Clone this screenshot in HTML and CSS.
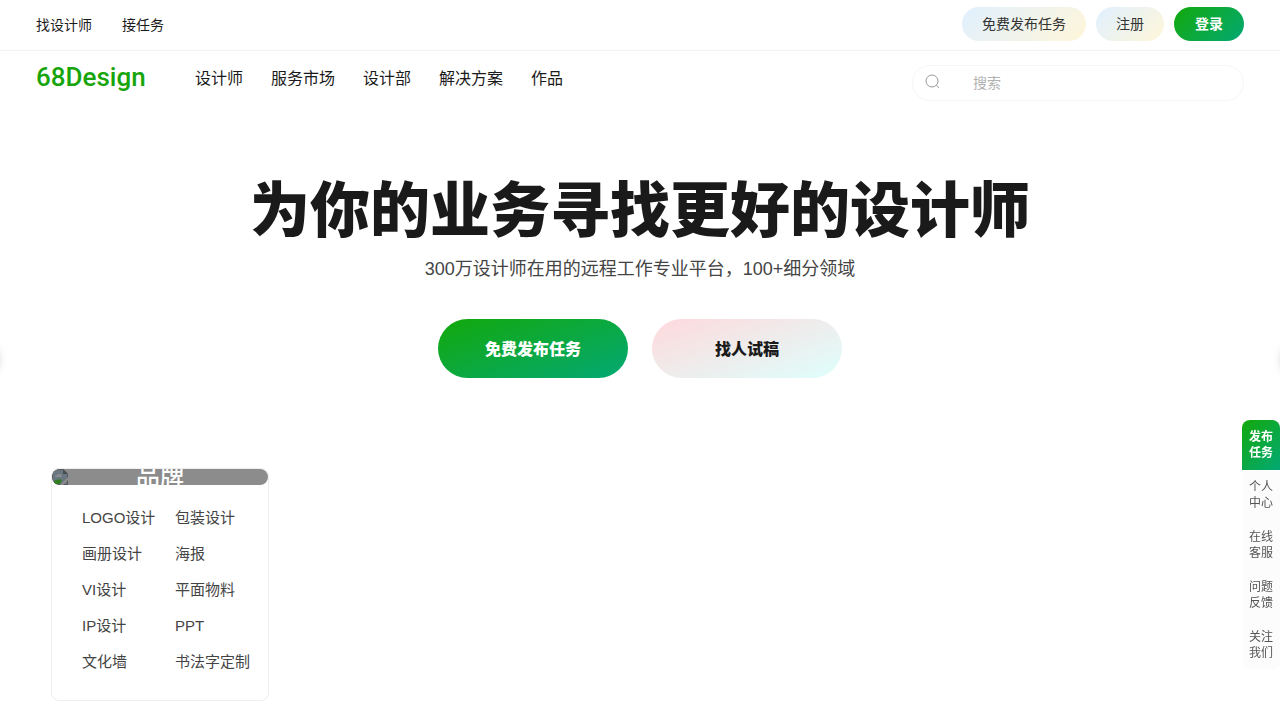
FILE: index.html
```html
<!DOCTYPE html>
<html lang="zh-CN">

<head>
    <meta charset="UTF-8">
    <meta name="viewport" content="width=device-width, initial-scale=1.0">
    <title>68Design</title>
    <link rel="stylesheet" href="styles.css">
</head>

<body>
    <div class="topbar">
        <nav class="topLinks">
            <a href="#">找设计师</a>
            <a href="#">接任务</a>
        </nav>
        <div class="account">
            <button class="pill" type="button">免费发布任务</button>
            <button class="pill" type="button">注册</button>
            <button class="pill login" type="button">登录</button>
        </div>
    </div>

    <header class="header">
        <a class="logo" href="#">68Design</a>
        <nav class="menu">
            <a href="#">设计师</a>
            <a href="#">服务市场</a>
            <a href="#">设计部</a>
            <a href="#">解决方案</a>
            <a href="#">作品</a>
        </nav>
        <form class="search">
            <svg width="16" height="18" viewBox="0 0 16 18" fill="none" stroke="#999" aria-hidden="true">
                <circle cx="7" cy="7" r="6" />
                <path d="M11.3 11.3 L14 13.8" />
            </svg>
            <input type="text" placeholder="搜索" aria-label="搜索">
        </form>
    </header>

    <main>
        <section class="hero">
            <h1>为你的业务寻找更好的设计师</h1>
            <p>300万设计师在用的远程工作专业平台，100+细分领域</p>
            <div class="actions">
                <button class="publish" type="button">免费发布任务</button>
                <button class="trial" type="button">找人试稿</button>
            </div>
        </section>

        <section class="card">
            <div class="cover">
                <svg width="16" height="16" viewBox="0 0 16 16" aria-hidden="true">
                    <path d="M0 0h11l5 5v11H0z" fill="#555b60" />
                    <path d="M1 1h10v4h4v10H1z" fill="#69767f" />
                    <path d="M3 8q0-2 2-2 1-2 3-1 2 0 2 3z" fill="#858b8f" />
                    <path d="M2 15v-3q4-3 8-1l-2 4z" fill="#327d20" />
                    <path d="M11 0v5h5z" fill="#484d50" />
                    <path d="M8 16l8-8v3l-5 5z" fill="#8c8c8c" />
                </svg>
                <h2>品牌</h2>
            </div>
            <ul class="types">
                <li><a href="#">LOGO设计</a></li>
                <li><a href="#">包装设计</a></li>
                <li><a href="#">画册设计</a></li>
                <li><a href="#">海报</a></li>
                <li><a href="#">VI设计</a></li>
                <li><a href="#">平面物料</a></li>
                <li><a href="#">IP设计</a></li>
                <li><a href="#">PPT</a></li>
                <li><a href="#">文化墙</a></li>
                <li><a href="#">书法字定制</a></li>
            </ul>
        </section>
    </main>

    <div class="arrow prev"></div>
    <div class="arrow next"></div>

    <aside class="sidebar">
        <a class="active" href="#">发布<br>任务</a>
        <a href="#">个人<br>中心</a>
        <a href="#">在线<br>客服</a>
        <a href="#">问题<br>反馈</a>
        <a href="#">关注<br>我们</a>
    </aside>
</body>

</html>
```
FILE: styles.css
```css
* {
  margin: 0;
  padding: 0;
  box-sizing: border-box;
}
body {
  font-family: "Liberation Sans", "Noto Sans CJK SC", sans-serif;
  font-size: 14px;
  color: #1a1a1a;
  background-color: #fff;
  overflow-x: hidden;
}
a {
  color: inherit;
  text-decoration: none;
}
button,
input {
  font-family: inherit;
  border: none;
  outline: none;
}
button {
  padding-bottom: 2px;
  cursor: pointer;
}
ul {
  list-style: none;
}

.topbar {
  display: flex;
  align-items: center;
  justify-content: space-between;
  padding: 7px 36px 9px;
  border-bottom: 1px solid #f2f2f2;
}
.topLinks {
  display: flex;
  gap: 30px;
}
.account {
  display: flex;
  gap: 10px;
}
.pill {
  height: 34px;
  padding: 0 20px 2px;
  border-radius: 17px;
  font-size: 14px;
  color: #333;
  background: linear-gradient(135deg, #e0f0ff, #fff6d9);
}
.pill.login {
  padding: 0 21px 2px;
  font-weight: bold;
  color: white;
  background: linear-gradient(135deg, #13a80b, #03a974);
}

.header {
  display: flex;
  align-items: flex-start;
  padding: 14px 36px 0;
}
.logo {
  width: 110px;
  margin-right: 49px;
  font-family: Roboto, sans-serif;
  font-size: 26px;
  font-weight: 500;
  line-height: 24px;
  color: #18a50b;
}
.menu {
  display: flex;
  gap: 28px;
  font-size: 16px;
  line-height: 28px;
}
.search {
  display: flex;
  align-items: center;
  width: 332px;
  height: 36px;
  margin-left: auto;
  padding: 0 12px;
  border: 1px solid #f5f5f5;
  border-radius: 18px;
}
.search input {
  flex: 1;
  min-width: 0;
  margin-left: 32px;
  font-size: 14px;
  background: none;
}
.search input::placeholder {
  color: #b2b2b2;
}

.hero {
  padding-top: 66px;
  text-align: center;
}
.hero h1 {
  font-size: 60px;
  font-weight: 900;
  line-height: 90px;
}
.hero p {
  font-size: 18px;
  line-height: 24px;
  color: #444;
}
.actions {
  display: flex;
  justify-content: center;
  gap: 24px;
  margin-top: 38px;
}
.actions button {
  width: 190px;
  height: 59px;
  border-radius: 30px;
  font-size: 16px;
  font-weight: 900;
}
.actions .publish {
  color: white;
  background: linear-gradient(160deg, #13a80b, #03a974);
}
.actions .trial {
  color: #1a1a1a;
  background: linear-gradient(160deg, #ffd9dc, #defffc);
}

.card {
  width: 218px;
  margin: 90px 0 20px 51px;
  border: 1px solid #eee;
  border-radius: 8px;
}
.cover {
  display: flex;
  align-items: center;
  height: 16px;
  border-radius: 8px;
  overflow: hidden;
  background-color: #8c8c8c;
}
.cover h2 {
  flex: 1;
  margin-right: 16px;
  font-size: 24px;
  font-weight: 500;
  line-height: 16px;
  text-align: center;
  color: white;
}
.types {
  display: grid;
  grid-template-columns: 93px 1fr;
  padding: 15px 0 20px 30px;
  font-size: 15px;
  line-height: 36px;
  color: #444;
  white-space: nowrap;
}

.arrow {
  position: fixed;
  top: 340px;
  width: 40px;
  height: 40px;
  border-radius: 50%;
  box-shadow: 0 0 10px rgba(0, 0, 0, 0.2);
}
.arrow.prev {
  left: -42px;
}
.arrow.next {
  right: -42px;
}

.sidebar {
  position: fixed;
  top: 420px;
  right: 0;
  width: 38px;
  border-radius: 8px;
  overflow: hidden;
  background-color: #fcfcfc;
  font-size: 12px;
  line-height: 16px;
  text-align: center;
  color: #555;
}
.sidebar a {
  display: block;
  padding: 9px 0;
}
.sidebar .active {
  font-weight: bold;
  color: white;
  background: linear-gradient(135deg, #13a80b, #03a974);
}
```
